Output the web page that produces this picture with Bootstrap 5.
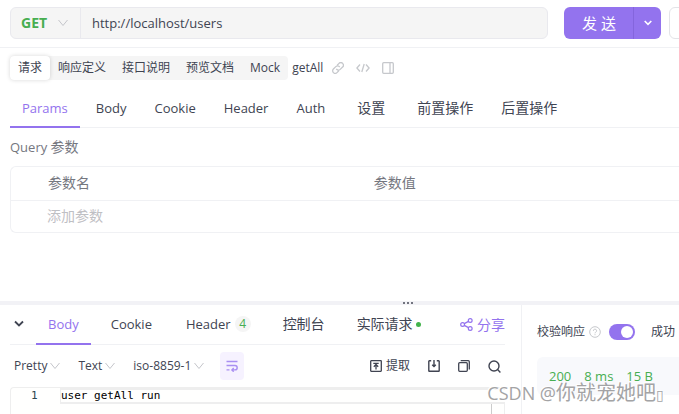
<!DOCTYPE html>
<html lang="zh-CN">
<head>
<meta charset="utf-8">
<meta name="viewport" content="width=device-width, initial-scale=1">
<title>getAll</title>
<link href="https://cdn.jsdelivr.net/npm/bootstrap@5.3.0/dist/css/bootstrap.min.css" rel="stylesheet">
<style>
:root{--violet:#9373ee;--ink:#404452;--line:#f0f1f4;--green:#47ae51}
body{font-family:"Open Sans","Noto Sans CJK SC",sans-serif;font-size:13px;line-height:20px;color:var(--ink);background:#fff}
svg{display:block;fill:none;stroke:currentColor;flex:none}
button{font:inherit;color:inherit}
.zh{font-size:14px}
.topbar{padding:7px 0 8px 10px;border-bottom:1px solid var(--line)}
.urlbox{height:32px;border:1px solid #e9e9ee;border-radius:6px;background:#f5f5f5;margin-right:16px;overflow:hidden}
.method{width:70px;border:0;border-right:1px solid #e9e9ee;background:none;padding:0 12px 0 10px;color:var(--green);font-weight:700;font-size:14px}
.method svg,.picker svg{color:#c4c5ca}
.urlbox input{border:0;background:none;padding:0 11px;color:var(--ink);min-width:0}
.send{height:32px;margin-right:8px}
.send .btn{background:var(--violet);color:#fff;border:0;border-radius:6px;padding:0;line-height:20px}
.send .main{width:70px;font-size:15px}
.send .more{width:28px;border-left:1px solid #8465dd}
.save{width:80px;height:32px;margin-right:-70px;border:1px solid #e3e4e8;border-radius:6px;background:#fff}
.modes{padding:8px 10px 0;font-size:12px}
.segment{background:#f5f5f5;border-radius:4px;margin-right:4px}
.segment button{height:24px;border:0;background:none;padding:0 8px;border-radius:4px}
.segment button.active{background:#fff;box-shadow:0 0 4px rgba(0,0,0,.16)}
.tools{color:#c6c8cc;gap:12px;margin-left:9px}
.tools button,.plain{border:0;background:none;padding:0}
.tabs{border-bottom:1px solid var(--line);gap:4px}
.tabs button{border:0;background:none;padding:0 12px;height:38px;margin-bottom:-1px;border-bottom:2px solid transparent;white-space:nowrap}
.tabs button.active{color:var(--violet);border-color:var(--violet);font-weight:500}
.tabs .wide{padding:0 14px}
.tabs .wider{padding:0 16px}
.main-tabs{margin:10px 0 0 10px}
.query{padding:9px 0 9px 10px;color:#75777f}
.params{margin-left:10px;border:1px solid var(--line);border-right:0;border-radius:6px 0 0 6px}
.params table{table-layout:fixed;font-size:14px}
.params th,.params td{height:33px;padding:0;font-weight:400;color:#75777f}
.params td{height:32px}
.params th{border-bottom:1px solid var(--line)}
.params th:first-child{width:54%;padding-left:37px}
.params th:last-child{padding-left:2px}
.params input{border:0;background:none;padding:0 0 0 36px;width:100%}
.params input::placeholder{color:#bfc0c4;opacity:1}
.splitter{height:4px;background:#f2f2f6;margin-top:68px}
.grip{gap:2px;margin-left:136px}
.grip i{width:2px;height:2px;background:#72747f}
.response{flex:1 1 0;min-width:0;padding:0 16px 0 10px}
.verify{width:158px;border-left:1px solid var(--line);padding:17px 0 0 15px;font-size:12px;overflow:hidden}
.help{color:#c6c8cc}
.res-tabs{gap:4px;height:40px}
.res-tabs button{height:40px}
.fold{width:18px!important;padding:0!important;margin-right:4px}
.count{width:16px;height:16px;border-radius:8px;background:#f5f5f5;color:var(--green);font-size:12px;line-height:16px;margin-left:4px}
.dot{width:5px;height:5px;border-radius:50%;background:#42b34c;margin-left:3px}
.share{color:var(--violet);font-size:14px;gap:4px}
.formats{height:42px;font-size:12px;padding:0 4px}
.picker{border:0;background:none;padding:0;gap:3px;margin-right:18px}
.wrap{width:24px;height:28px;border:0;border-radius:4px;background:#f6f2ff;color:#a98ff2;padding:0;margin-left:-2px}
.actions{gap:18px}
.editor{border:1px solid #eee;border-right:0;border-bottom:0;border-radius:4px 0 0 0;background:#fffffe;height:28px;font-family:"DejaVu Sans Mono",monospace;font-size:11px;line-height:12px;color:#000}
.editor .num{width:49px;color:#2c4650;padding-left:20px;padding-top:2px}
.editor .codeline{height:16px;border:2px solid #eee;border-right:0;border-left:1px solid #eee}
.editor .rail{width:14px;height:11px;border-left:1px solid #ccc;border-right:1px solid #eee}
.form-switch{padding:0;min-height:0;margin:0}
.form-switch .form-check-input{width:26px;height:16px;margin:0;background-color:var(--violet);border:0;float:none;display:block}
.stats{background:#f8f9fc;border-radius:6px 0 0 6px;height:38px;margin-top:15px;padding:0 12px;gap:13px;color:var(--green);font-size:13px}
.brand-note{position:absolute;right:15px;bottom:4px;font-size:18px;line-height:32px;color:#a3a3a5;text-shadow:1px 1px 0 #fff,-1px -1px 0 #fff;white-space:nowrap;pointer-events:none}
.brand-note .han{font-size:20px}
.brand-note .box{font-size:14px}
</style>
<script src="https://cdn.jsdelivr.net/npm/bootstrap@5.3.0/dist/js/bootstrap.bundle.min.js"></script>
</head>
<body class="position-relative overflow-hidden">
<header class="topbar d-flex overflow-hidden">
  <div class="urlbox d-flex flex-grow-1">
    <button class="method d-flex align-items-center justify-content-between" type="button">GET
      <svg width="10" height="10" viewBox="0 0 10 10"><path d="M.5 2 5 7.5 9.5 2"/></svg></button>
    <input class="flex-grow-1" type="text" aria-label="URL" value="http://localhost/users">
  </div>
  <div class="send btn-group">
    <button class="btn main" type="button">发 送</button>
    <button class="btn more d-flex align-items-center justify-content-center" type="button" aria-label="更多">
      <svg width="8" height="6" viewBox="0 0 8 6" stroke-width="1.6"><path d="M.7 1 4 4.4 7.3 1"/></svg></button>
  </div>
  <button class="save flex-shrink-0" type="button" aria-label="保存"></button>
</header>

<div class="modes d-flex align-items-center">
  <div class="segment d-flex">
    <button class="active" type="button">请求</button><button type="button">响应定义</button><button type="button">接口说明</button><button type="button">预览文档</button><button type="button">Mock</button>
  </div>
  <span>getAll</span>
  <div class="tools d-flex">
    <button type="button" aria-label="链接"><svg width="12" height="12" viewBox="0 0 12 12" stroke-width="1.3"><path d="M5.2 3.2 7 1.4a2.5 2.5 0 0 1 3.6 3.6L8.2 7.400a2.500 2.500 0 0 1-3.900-.5M6.800 8.800 5 10.600A2.500 2.500 0 0 1 1.400 7l2.400-2.400a2.500 2.500 0 0 1 3.900.5"/></svg></button>
    <button type="button" aria-label="代码"><svg width="14" height="12" viewBox="0 0 14 12" stroke-width="1.3"><path d="M4 2.500.9 6 4 9.500M10 2.500 13.100 6 10 9.500M8.200 2 5.800 10"/></svg></button>
    <button type="button" aria-label="侧栏"><svg width="12" height="12" viewBox="0 0 12 12" stroke-width="1.3"><rect x=".7" y=".7" width="10.6" height="10.6" rx="1"/><path d="M8 .7v10.6"/></svg></button>
  </div>
</div>

<nav class="tabs main-tabs d-flex">
  <button class="active" type="button">Params</button><button type="button">Body</button><button type="button">Cookie</button><button type="button">Header</button><button type="button">Auth</button><button class="zh wider" type="button">设置</button><button class="zh" type="button">前置操作</button><button class="zh" type="button">后置操作</button>
</nav>

<main>
  <div class="query">Query <span class="zh">参数</span></div>
  <div class="params">
    <table class="w-100">
      <thead><tr><th>参数名</th><th>参数值</th></tr></thead>
      <tbody><tr><td><input type="text" aria-label="参数名" placeholder="添加参数"></td><td></td></tr></tbody>
    </table>
  </div>
</main>

<div class="splitter d-flex align-items-center justify-content-center"><div class="grip d-flex"><i></i><i></i><i></i></div></div>

<section class="d-flex">
  <div class="response">
    <div class="tabs res-tabs d-flex align-items-center">
      <button class="fold d-flex align-items-center justify-content-center" type="button" aria-label="收起"><svg width="10" height="8" viewBox="0 0 10 8" stroke-width="1.8"><path d="M1 1.5 5 5.5 9 1.5"/></svg></button>
      <button class="active" type="button">Body</button>
      <button class="wider" type="button">Cookie</button>
      <button class="wide d-flex align-items-center" type="button">Header<span class="count">4</span></button>
      <button class="zh wide" type="button">控制台</button>
      <button class="zh wide d-flex align-items-center" type="button">实际请求<span class="dot"></span></button>
      <a class="share d-flex align-items-center ms-auto text-decoration-none text-nowrap" href="#"><svg width="13" height="13" viewBox="0 0 13 13" stroke-width="1.2"><circle cx="2.6" cy="6.5" r="1.9"/><circle cx="10.2" cy="2.5" r="1.9"/><circle cx="10.2" cy="10.5" r="1.9"/><path d="m4.3 5.6 4.2-2.2M4.3 7.4l4.2 2.2"/></svg>分享</a>
    </div>
    <div class="formats d-flex align-items-center">
      <button class="picker d-flex align-items-center" type="button">Pretty<svg width="10" height="10" viewBox="0 0 10 10"><path d="M.5 2 5 7.5 9.5 2"/></svg></button>
      <button class="picker d-flex align-items-center" type="button">Text<svg width="10" height="10" viewBox="0 0 10 10"><path d="M.5 2 5 7.5 9.5 2"/></svg></button>
      <button class="picker d-flex align-items-center" type="button">iso-8859-1<svg width="10" height="10" viewBox="0 0 10 10"><path d="M.5 2 5 7.5 9.5 2"/></svg></button>
      <button class="wrap d-flex align-items-center justify-content-center" type="button" aria-label="换行"><svg width="12" height="12" viewBox="0 0 12 12" stroke-width="1.4"><path d="M.5 1.5h11M.5 5.5h8.500a2.200 2.200 0 0 1 0 4.400H6M.5 9.900h3M7.700 8 5.900 9.900l1.800 1.800"/></svg></button>
      <div class="actions d-flex align-items-center ms-auto">
        <button class="plain d-flex align-items-center gap-1" type="button"><svg width="12" height="12" viewBox="0 0 12 12" stroke-width="1.3"><rect x=".7" y=".7" width="10.6" height="10.6" rx=".5"/><path d="M3.300 3.300h5.400M6 9.500V4.500M3.800 6.700 6 4.500l2.200 2.200"/></svg>提取</button>
        <button class="plain" type="button" aria-label="下载"><svg width="12" height="12" viewBox="0 0 12 12" stroke-width="1.4"><path d="M3.200.8H1.300a.5.5 0 0 0-.5.5v9.400a.5.5 0 0 0 .5.5h9.400a.5.5 0 0 0 .5-.5V1.300a.5.5 0 0 0-.5-.5H8.800M6 0v6.300M4.200 4.700 6 6.500l1.800-1.800"/></svg></button>
        <button class="plain" type="button" aria-label="复制"><svg width="12" height="12" viewBox="0 0 12 12" stroke-width="1.3"><rect x=".7" y="2.700" width="8.600" height="8.600" rx="1"/><path d="M2.700.7h7.600a1 1 0 0 1 1 1V9.500"/></svg></button>
        <button class="plain" type="button" aria-label="搜索"><svg width="13" height="13" viewBox="0 0 13 13" stroke-width="1.4"><circle cx="6" cy="6" r="5"/><path d="m9.600 9.600 2.800 2.800"/></svg></button>
      </div>
    </div>
    <div class="editor d-flex">
      <div class="num">1</div>
      <div class="flex-grow-1"><div class="codeline">user getAll run</div><div class="rail ms-auto"></div></div>
    </div>
  </div>
  <aside class="verify">
    <div class="d-flex align-items-center text-nowrap">
      <label for="verify">校验响应</label>
      <svg class="help ms-1 me-2" width="12" height="12" viewBox="0 0 12 12"><circle cx="6" cy="6" r="5.300"/><path d="M4.400 4.800a1.600 1.600 0 1 1 2.300 1.400Q6 6.500 6 7.300M6 8.200v1"/></svg>
      <div class="form-check form-switch"><input class="form-check-input" id="verify" type="checkbox" role="switch" checked></div>
      <span class="ms-3">成功</span>
    </div>
    <div class="stats d-flex align-items-center text-nowrap"><span>200</span><span>8 ms</span><span>15 B</span></div>
  </aside>
</section>
<div class="brand-note">CSDN @<span class="han">你就宠她吧</span><span class="box">▯</span></div>
</body>
</html>
